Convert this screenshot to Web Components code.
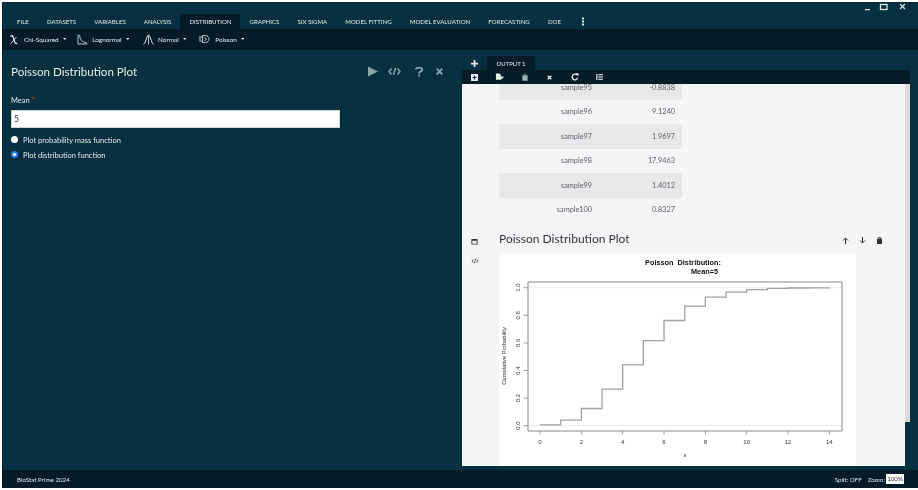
<!DOCTYPE html>
<html><head><meta charset="utf-8"><style>
html,body{margin:0;height:100%;background:#fff;overflow:hidden}
body{font-family:"Lato","Liberation Sans",sans-serif}
</style></head><body>
<app-shell>
  <top-bar slot="top"></top-bar>
  <menu-bar slot="top"></menu-bar>
  <tool-bar slot="top"></tool-bar>
  <dialog-panel slot="left"></dialog-panel>
  <output-panel slot="right"></output-panel>
  <status-bar slot="bottom"></status-bar>
</app-shell>
<script>
function def(name,css,html){
  customElements.define(name,class extends HTMLElement{
    constructor(){super();const r=this.attachShadow({mode:'open'});
      r.innerHTML='<style>'+css+'</style>'+(typeof html==='function'?html(this):html);}
  });
}
def('app-shell',`:host{display:grid;grid-template-rows:auto 1fr auto;width:916px;height:486px;margin:2px 0 0 2px;background:#06303f;color:#e8edef;overflow:hidden;filter:blur(.3px)}
 .top{display:flex;flex-direction:column}.main{display:grid;grid-template-columns:460px 1fr;min-height:0}`,
 `<div class="top"><slot name="top"></slot></div><div class="main"><slot name="left"></slot><slot name="right"></slot></div><slot name="bottom"></slot>`);
def('top-bar',`:host{display:flex;justify-content:flex-end;align-items:center;height:12px;gap:5px;padding-right:10px;color:#dfe6e9}svg{display:block}`,
 `<svg width="10" height="10" viewBox="0 0 10 10" style="margin-right:1px"><rect x="2" y="6" width="5" height="1.300" fill="currentColor"/></svg>
  <svg width="10" height="10" viewBox="0 0 10 10"><rect x="1.500" y="1.500" width="6.500" height="5" fill="none" stroke="currentColor" stroke-width="1.300"/></svg>
  <svg width="10" height="10" viewBox="0 0 10 10" style="margin-left:4px"><path d="M2 1l5 5M7 1l-5 5" stroke="currentColor" stroke-width="1.100"/></svg>`);
const menus=[['FILE'],['DATASETS'],['VARIABLES'],['ANALYSIS'],['DISTRIBUTION',1],['GRAPHICS'],['SIX SIGMA'],['MODEL FITTING'],['MODEL EVALUATION'],['FORECASTING'],['DOE']];
def('menu-bar',`:host{display:flex;height:15px;padding-left:6px;font-size:6.100px;color:#e4eaec;align-items:stretch;white-space:nowrap}
 span{padding:0 9.050px;display:flex;align-items:center}
 .on{background:#031c28;}
 svg{align-self:center;margin-left:11px}`,
 menus.map(m=>`<span class="${m[1]?'on':''}">${m[0]}</span>`).join('')+
 `<svg width="4" height="9" viewBox="0 0 4 9"><g fill="#e8edef"><rect x="1" y="0.500" width="2" height="2"/><rect x="1" y="3.500" width="2" height="2"/><rect x="1" y="6.500" width="2" height="2"/></g></svg>`);
const caret='<svg class="c" width="3.500" height="2" viewBox="0 0 5 3"><path d="M0 0h5L2.500 3z" fill="currentColor"/></svg>';
def('tool-bar',`:host{display:flex;align-items:center;height:20px;padding-bottom:1px;background:#031c28;color:#e4eaec;font-size:6.400px;padding-left:8px;white-space:nowrap}
 .b{display:flex;align-items:center}.c{margin-left:4px}`,
 `<div class="b" style="margin-right:11px"><svg style="margin-right:6px" width="8" height="11" viewBox="0 0 8 11" fill="none" stroke="#e8edef"><path d="M.5 2.500c1.200-1.500 2-1 2.800 1.200L5 8.500c.4 1 1.200 1.300 2.300.7" stroke-width="1.300"/><path d="M.8 9.500L6.500 3" stroke-width=".9"/></svg>Chi-Squared ${caret}</div>
  <div class="b" style="margin-right:14px"><svg style="margin-right:4px" width="11" height="11" viewBox="0 0 11 11" fill="none" stroke="#e8edef" stroke-width=".8"><path d="M1 .5v9.500h9.500"/><path d="M2.500 1c.5 4.500 2 6.800 7.500 8"/></svg>Lognormal ${caret}</div>
  <div class="b" style="margin-right:13px"><svg style="margin-right:4px" width="11" height="11" viewBox="0 0 11 11" fill="none" stroke="#e8edef"><path d="M.5 10.500C3 8.500 3.800 1 5.500 1S8 8.500 10.500 10.500" stroke-width="1"/><path d="M5.500 2v8.500" stroke-width=".8"/></svg>Normal ${caret}</div>
  <div class="b"><svg style="margin-right:5px" width="11" height="8" viewBox="0 0 11 8" fill="none" stroke="#e8edef" stroke-width=".8"><path d="M0 2h3M0 4h2M0 6h3M3.500 .5h3c2 0 3.500 1.500 3.500 3.500S8.500 7.500 6.500 7.500h-3z"/><path d="M5.500 2l2 2-2 2"/></svg>Poisson ${caret}</div>`);
def('dialog-panel',`:host{display:block;padding:11.500px 0 0 9px;color:#e4eaec;font-size:7.500px}
 .hd{display:flex;align-items:center;width:432px;height:20px;justify-content:space-between}
 h1{margin:0;font-weight:400;font-size:11.600px;color:#e8edef}
 .ic{display:flex;align-items:center;color:#8da3ac}
 label.m{display:block;margin-top:14.500px;font-size:7.500px}label.m b{color:#e23b3b;font-weight:400}
 input{display:block;box-sizing:border-box;width:329px;height:18px;margin:5px 0 5px 0;border:1px solid #cfd6d9;padding:0 2px;font:8.500px "Lato",sans-serif;color:#333;background:#fff;border-radius:0;outline:0}
 .r{display:flex;align-items:center;height:14.500px;gap:5px;font-size:7.500px;margin-top:1px}
 .r+.r{margin-top:.5px}
 .d{width:7px;height:7px;border-radius:50%;background:#fff;box-sizing:border-box;margin-top:-2px;flex:none}.d.s{border:2px solid #2f80ed}`,
 `<div class="hd"><h1>Poisson Distribution Plot</h1><div class="ic">
 <svg width="10" height="11" viewBox="0 0 10 11" style="margin-right:10px"><path d="M0 .5L10 5.500 0 10.500z" fill="currentColor"/></svg>
 <svg width="13" height="9" viewBox="0 0 13 9" fill="none" stroke="currentColor" stroke-width="1.500" style="margin-right:14px"><path d="M3.500 1.500L1 4.500l2.500 3M9.500 1.500L12 4.500l-2.500 3M7.500 1L5.500 8"/></svg>
 <svg width="8" height="11" viewBox="0 0 8 11" fill="none" stroke="currentColor" stroke-width="1.800" style="margin-right:13px"><path d="M.7 3.500C.7 1 7.300 .8 7.300 3.500c0 2-3.300 2-3.300 4"/><path d="M4 8.500v2"/></svg>
 <svg width="7" height="7" viewBox="0 0 7 7" stroke="currentColor" stroke-width="1.800"><path d="M.7 .7l5.600 5.600M6.300 .7l-5.600 5.600"/></svg>
 </div></div>
 <label class="m">Mean <b>*</b></label><input value="5">
 <div class="r"><span class="d"></span>Plot probability mass function</div>
 <div class="r"><span class="d s"></span>Plot distribution function</div>`);
def('output-tabs',`:host{display:flex;align-items:stretch;height:14px;color:#e8edef;font-size:6px}
 .p{width:25px;display:flex;align-items:center;justify-content:center;box-sizing:border-box}
 .t{background:#031c28;width:48px;display:flex;align-items:center;justify-content:center;border-radius:2px 2px 0 0}`,
 `<div class="p"><svg width="7" height="7" viewBox="0 0 8 8"><path d="M3 0h2v3h3v2H5v3H3V5H0V3h3z" fill="currentColor"/></svg></div><div class="t">OUTPUT 1</div>`);
def('output-tools',`:host{display:flex;align-items:center;height:14px;background:#031c28;color:#e8edef;border-radius:2px 2px 0 0}
 span{width:25px;display:flex;justify-content:center}svg{display:block}`,
 `<span><svg width="7" height="7" viewBox="0 0 9 9"><path fill-rule="evenodd" d="M0 0h9v9H0zM3.800 2v1.800H2v1.400h1.800V7h1.400V5.200H7V3.800H5.200V2z" fill="currentColor"/></svg></span>
  <span><svg width="9" height="8" viewBox="0 0 10 9"><path d="M1 .5h4l1.500 1.500v2h3v1l-3 2.500H1z" fill="currentColor"/></svg></span>
  <span><svg width="6" height="8" viewBox="0 0 8 10"><path d="M.5 2.500h7V10h-7zM2.500 .5h3V1.700h-3z" fill="#9fb0b7"/></svg></span>
  <span><svg width="5" height="5" viewBox="0 0 7 7" stroke="currentColor" stroke-width="1.800"><path d="M1 1l5 5M6 1l-5 5"/></svg></span>
  <span><svg width="8" height="8" viewBox="0 0 9 9" fill="none" stroke="currentColor" stroke-width="1.500"><path d="M7.500 5.500A3.200 3.200 0 1 1 6.500 2"/><path d="M5 .3h3.500v3.500z" fill="currentColor" stroke="none"/></svg></span>
  <span><svg width="7" height="6" viewBox="0 0 9 8" fill="#b9c6cb"><rect x="0" y="0" width="1.800" height="8"/><rect x="2.800" y="0" width="6.200" height="1.800"/><rect x="2.800" y="3.100" width="6.200" height="1.800"/><rect x="2.800" y="6.200" width="6.200" height="1.800"/></svg></span>`);
def('output-table',`:host{display:block;margin:-9px 0 0 37px;width:183px;font-size:7.300px;color:#5f6468}
 .w{display:grid;grid-template-columns:93px 83px 7px}
 .w>div{height:24.500px;display:flex;align-items:center;justify-content:flex-end;}
 .z{background:#e8e8ea}`,
 ()=>{const rows=[['sample95','-0.8838',1],['sample96','9.1240'],['sample97','1.9697',1],['sample98','17.9463'],['sample99','1.4012',1],['sample100','0.8327']];
  return '<div class="w">'+rows.map(r=>{const c=r[2]?'z':'';return `<div class="${c}">${r[0]}</div><div class="${c}">${r[1]}</div><div class="${c}"></div>`}).join('')+'</div>'});
def('poisson-plot',`:host{display:block;width:357px;height:213px;background:#fff;flex:none}svg{display:block}
 text{font-family:"Liberation Sans",Arial,sans-serif;fill:#333}`,
 ()=>{
  const X=i=>41+i*20.670, Y=v=>172.700-v*138;
  const cdf=[0.0067,0.0404,0.1247,0.2650,0.4405,0.6160,0.7622,0.8666,0.9319,0.9682,0.9863,0.9945,0.9980,0.9993,0.9998];
  let d=`M${X(0)} ${Y(cdf[0])}`; for(let i=1;i<=14;i++){d+=`H${X(i)}V${Y(cdf[i])}`}
  let xt='';for(let i=0;i<=14;i+=2){xt+=`<path d="M${X(i)} 178v3.500" stroke="#777" stroke-width=".7"/><text x="${X(i)}" y="191" font-size="6" text-anchor="middle">${i}</text>`}
  let yt='';[0,.2,.4,.6,.8,1].forEach(v=>{yt+=`<path d="M24.500 ${Y(v)}h4.500" stroke="#777" stroke-width=".7"/><text transform="translate(20.500 ${Y(v)}) rotate(-90)" font-size="6" text-anchor="middle">${v.toFixed(1)}</text>`});
  return `<svg width="357" height="213" viewBox="0 0 357 213">
  <text x="184" y="12" font-size="7.300" font-weight="700" text-anchor="middle" style="fill:#111;white-space:pre">Poisson  Distribution:</text>
  <text x="205.500" y="20.500" font-size="7.300" font-weight="700" text-anchor="middle" style="fill:#111">Mean=5</text>
  <path d="M29 ${Y(0)}H343M29 ${Y(1)}H343" stroke="#e2e2e2" stroke-width=".7"/>
  <path d="M29 29H343V178H29z" fill="none" stroke="#8a8a8a" stroke-width="1"/>
  <path d="${d}" fill="none" stroke="#a0a0a0" stroke-width="1.300"/>
  ${xt}${yt}
  <text transform="translate(6.500 103) rotate(-90)" font-size="5.800" text-anchor="middle">Cumulative Probability</text>
  <text x="186" y="204" font-size="6" text-anchor="middle">x</text></svg>`});
def('plot-section',`:host{display:grid;grid-template-columns:37px 1fr;margin-top:7px;color:#333}
 .side{display:flex;flex-direction:column;align-items:center;gap:13px;padding-top:9px;padding-right:12px}
 .hd{display:flex;justify-content:space-between;align-items:center;height:19px;width:384px;margin-bottom:5px}
 h2{margin:0;font-weight:400;font-size:12px;color:#33383b}
 .a{display:flex;gap:10px;color:#333;align-items:center;margin-top:4px}svg{display:block}`,
 `<div class="side"><svg width="7" height="7" viewBox="0 0 8 8"><path fill-rule="evenodd" d="M.5 1h7v6.500h-7zM1.500 3v3.500h5V3z" fill="#333"/></svg>
  <svg width="8" height="6" viewBox="0 0 8 7" fill="none" stroke="#333" stroke-width=".9"><path d="M2 1.500L.5 3.500l1.500 2M6 1.500l1.500 2-1.500 2M4.700 1l-1.400 5"/></svg></div>
  <div><div class="hd"><h2>Poisson Distribution Plot</h2><div class="a">
  <svg width="7" height="7" viewBox="0 0 7 7" fill="none" stroke="#333" stroke-width="1"><path d="M3.500 7V1M1 3.500l2.500-2.500L6 3.500"/></svg>
  <svg width="7" height="7" viewBox="0 0 7 7" fill="none" stroke="#333" stroke-width="1"><path d="M3.500 0v6M1 3.500L3.500 6 6 3.500"/></svg>
  <svg width="7" height="7" viewBox="0 0 7 7"><path d="M1 1.500h5V7H1zM2 .3h3v.8H2z" fill="#333"/></svg></div></div>
  <poisson-plot></poisson-plot></div>`);
def('output-panel',`:host{display:flex;flex-direction:column;min-height:0;overflow:hidden;padding:6px 0 4px}
 .wrap{width:448px;display:flex;flex-direction:column;flex:1;min-height:0}
 .sc{flex:1;min-height:0;background:#f4f5f7;position:relative;overflow:hidden}
 .bar{position:absolute;right:0;top:0;bottom:0;width:5px;background:#dcdcdc}
 .thumb{position:absolute;right:0;bottom:0;height:44px;width:5px;background:#06303f}`,
 `<div class="wrap"><output-tabs></output-tabs><output-tools></output-tools><div class="sc"><output-table></output-table><plot-section></plot-section><div class="bar"><div class="thumb"></div></div></div></div>`);
def('status-bar',`:host{display:flex;align-items:center;height:18px;background:#031c28;color:#dfe6e9;font-size:6.200px;padding:0 14px 0 15px}
 .sp{flex:1}.z{background:#fff;color:#333;width:18px;text-align:center;margin-left:1px;line-height:10px}.g{margin-right:6px}`,
 `<span>BioStat Prime 2024</span><span class="sp"></span><span class="g">Split: OFF</span><span>Zoom:</span><span class="z">100%</span>`);
</script></body></html>
